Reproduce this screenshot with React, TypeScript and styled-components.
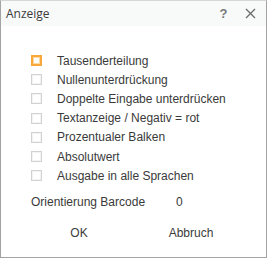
import styled, { createGlobalStyle } from 'styled-components'

const GlobalStyle = createGlobalStyle`
	html, body {
		margin: 0;
		padding: 0;
		background: #ffffff;
	}
	body {
		font-family: 'Liberation Sans', Arial, sans-serif;
	}
`

const Window = styled.div`
	width: 267px;
	height: 258px;
	box-sizing: border-box;
	border: 1px solid #a3a3a3;
	border-top-color: #d6d6d6;
	background: #ffffff;
	display: flex;
	flex-direction: column;
`

const TitleBar = styled.div`
	height: 25px;
	background: #f8f9f9;
	display: flex;
	align-items: center;
	padding: 0 2px 0 5px;
`

const Title = styled.div`
	flex: 1;
	font-family: 'Open Sans', sans-serif;
	font-size: 12px;
	color: #3c3c3c;
`

const TitleButton = styled.div`
	width: 27px;
	height: 25px;
	display: flex;
	align-items: center;
	justify-content: center;
	color: #7a7a7a;
	font-size: 13px;
	font-weight: bold;
`

const Body = styled.div`
	display: flex;
	flex-direction: column;
	padding: 25px 0 0 30px;
`

const Row = styled.label`
	display: flex;
	align-items: center;
	height: 19.2px;
	gap: 15px;
	font-size: 12px;
	color: #3a3a3a;
`

const Box = styled.span<{ $active?: boolean }>`
	width: 11px;
	height: 11px;
	box-sizing: border-box;
	border: ${p => (p.$active ? '2px solid #f9a93c' : '1px solid #d2d2d2')};
	background: #ffffff;
	box-shadow: ${p =>
		p.$active ? 'inset 0 0 0 1px #fdd8a0' : 'inset 0 0 0 1px #f3f3f3'};
`

const Field = styled.div`
	display: flex;
	align-items: center;
	height: 20px;
	margin: 7px 0 0 0;
	font-size: 12px;
	color: #3a3a3a;
`

const FieldLabel = styled.span`
	width: 145px;
`

const Buttons = styled.div`
	display: flex;
	gap: 12px;
	margin: 10px 0 0 -2px;
`

const Button = styled.div`
	width: 100px;
	height: 22px;
	display: flex;
	align-items: center;
	justify-content: center;
	font-size: 12px;
	color: #3a3a3a;
	background: #ffffff;
`

const options = [
	'Tausenderteilung',
	'Nullenunterdrückung',
	'Doppelte Eingabe unterdrücken',
	'Textanzeige / Negativ = rot',
	'Prozentualer Balken',
	'Absolutwert',
	'Ausgabe in alle Sprachen',
]

export default function App() {
	return (
		<>
			<GlobalStyle />
			<Window>
				<TitleBar>
					<Title>Anzeige</Title>
					<TitleButton>?</TitleButton>
					<TitleButton>
						<svg width='11' height='11' viewBox='0 0 11 11'>
							<path d='M1 1 L10 10 M10 1 L1 10' stroke='#6e6e6e' strokeWidth='1.4' />
						</svg>
					</TitleButton>
				</TitleBar>
				<Body>
					{options.map((o, i) => (
						<Row key={o}>
							<Box $active={i === 0} />
							{o}
						</Row>
					))}
					<Field>
						<FieldLabel>Orientierung Barcode</FieldLabel>0
					</Field>
					<Buttons>
						<Button>OK</Button>
						<Button>Abbruch</Button>
					</Buttons>
				</Body>
			</Window>
		</>
	)
}
